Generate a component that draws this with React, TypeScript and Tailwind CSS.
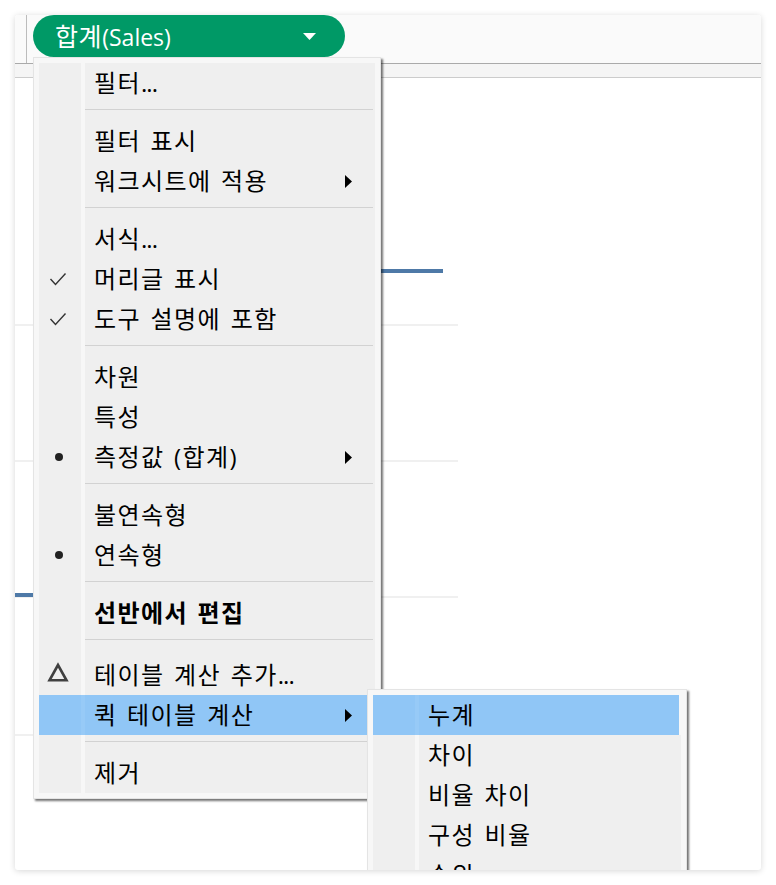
const font = { fontFamily: '"Open Sans", "Noto Sans CJK KR", sans-serif' }

type Row = {
  label?: string
  mark?: 'check' | 'dot' | 'delta'
  arrow?: boolean
  active?: boolean
  bold?: boolean
  tall?: boolean
  sep?: boolean
}

const mainRows: Row[] = [
  { label: '필터...' },
  { sep: true },
  { label: '필터 표시' },
  { label: '워크시트에 적용', arrow: true },
  { sep: true },
  { label: '서식...' },
  { label: '머리글 표시', mark: 'check' },
  { label: '도구 설명에 포함', mark: 'check' },
  { sep: true },
  { label: '차원' },
  { label: '특성' },
  { label: '측정값 (합계)', mark: 'dot', arrow: true },
  { sep: true },
  { label: '불연속형' },
  { label: '연속형', mark: 'dot' },
  { sep: true },
  { label: '선반에서 편집', bold: true },
  { sep: true },
  { label: '테이블 계산 추가...', mark: 'delta', tall: true },
  { label: '퀵 테이블 계산', arrow: true, active: true },
  { sep: true },
  { label: '제거' },
]

const subRows: Row[] = [
  { label: '누계', active: true },
  { label: '차이' },
  { label: '비율 차이' },
  { label: '구성 비율' },
  { label: '순위' },
]

function Mark({ type }: { type: Row['mark'] }) {
  if (type === 'check') {
    return (
      <svg width="18" height="14" viewBox="0 0 18 14" fill="none" stroke="#333" strokeWidth="1.4" className="mr-[2px]">
        <path d="M1.5 7 L6.5 12.5 L16.5 1.5" />
      </svg>
    )
  }
  if (type === 'dot') return <div className="w-2 h-2 rounded-full bg-[#222]" />
  if (type === 'delta') {
    return (
      <svg width="22" height="20" viewBox="0 0 22 20" fill="none" stroke="#404040" strokeWidth="2.6" className="mr-[3px] mb-[3px]">
        <path d="M11 3 L2.5 18.3 H19.5 Z" />
      </svg>
    )
  }
  return null
}

function MenuRow({ row, sub }: { row: Row; sub?: boolean }) {
  if (row.sep) {
    return (
      <div className="flex h-[18px]">
        <div className="w-[42px] bg-[#efefef]" />
        <div className="w-1 bg-[#f7f7f7]" />
        <div className="flex-1 bg-[#efefef] pt-[6px] pr-[2px]">
          <div className="h-px bg-[#d2d2d2]" />
        </div>
      </div>
    )
  }
  const bg = row.active ? 'bg-[#90c6f6]' : 'bg-[#efefef]'
  const hasDots = row.label?.endsWith('...')
  const text = hasDots ? row.label?.slice(0, -3) : row.label
  return (
    <div className={`flex ${row.tall ? 'h-[44px]' : 'h-10'}`}>
      <div className={`w-[42px] flex items-center justify-center pr-[2px] ${bg}`}>
        <Mark type={row.mark} />
      </div>
      <div className={`w-1 ${row.active ? 'bg-[#97caf7]' : 'bg-[#f7f7f7]'}`} />
      <div className={`flex-1 flex items-center justify-between pl-[9px] pr-[23px] ${bg} ${row.tall ? 'pt-1' : ''} ${sub && row.active ? 'mr-[2px]' : ''}`}>
        <span className={`text-[24px] leading-none tracking-[1.4px] [word-spacing:2px] text-black whitespace-nowrap ${row.bold ? 'font-bold' : ''}`}>
          {text}
          {hasDots && <span className="tracking-[-0.9px]">...</span>}
        </span>
        {row.arrow && (
          <svg width="7" height="13" viewBox="0 0 7 13" fill="#000">
            <path d="M0 0 L7 6.5 L0 13 Z" />
          </svg>
        )}
      </div>
    </div>
  )
}

export default function App() {
  return (
    <div className="w-[776px] h-[885px] bg-white px-[15px] pt-[15px]" style={font}>
      <div className="relative w-[746px] h-[855px] bg-white rounded-[3px] overflow-hidden shadow-[0_1px_6px_rgba(0,0,0,0.16)]">
        <div className="h-12 bg-[#fafafa] flex pl-[11px]">
          <div className="w-px bg-[#bcbcbc]" />
          <div className="ml-[6px] w-[312px] h-[42px] rounded-full bg-[#009966] flex items-center justify-between pl-[22px] pr-[29px]">
            <span className="text-[25px] leading-none tracking-[0.6px] text-white whitespace-nowrap">
              합계<span className="text-[23px] tracking-[0px]">(Sales)</span>
            </span>
            <svg width="13" height="7" viewBox="0 0 13 7" fill="#fff">
              <path d="M0 0 H13 L6.5 7 Z" />
            </svg>
          </div>
        </div>
        <div className="h-[15px] bg-[#f5f5f5] border-y border-t-[#aaaaaa] border-b-[#cccccc]" />
        <svg width="746" height="792" viewBox="0 0 746 792" className="block">
          <g fill="#f0f0f0">
            <rect x="0" y="246" width="443" height="2" />
            <rect x="0" y="382" width="443" height="2" />
            <rect x="0" y="518" width="443" height="2" />
            <rect x="0" y="656" width="443" height="2" />
          </g>
          <rect x="300" y="191" width="128" height="4" fill="#4e79a7" />
          <rect x="0" y="515" width="30" height="4" fill="#4e79a7" />
        </svg>

        <div className="absolute left-[18px] top-[42px] w-[348px] bg-[#f7f7f7] border border-[#e4e4e4] p-[5px] shadow-[2px_2px_2px_rgba(0,0,0,0.55)]">
          {mainRows.map((row, i) => (
            <MenuRow key={i} row={row} />
          ))}
        </div>

        <div className="absolute left-[352px] top-[674px] w-[320px] bg-[#f7f7f7] border border-[#e4e4e4] p-[5px] shadow-[2px_2px_2px_rgba(0,0,0,0.55)]">
          {subRows.map((row, i) => (
            <MenuRow key={i} row={row} sub />
          ))}
        </div>
      </div>
    </div>
  )
}
